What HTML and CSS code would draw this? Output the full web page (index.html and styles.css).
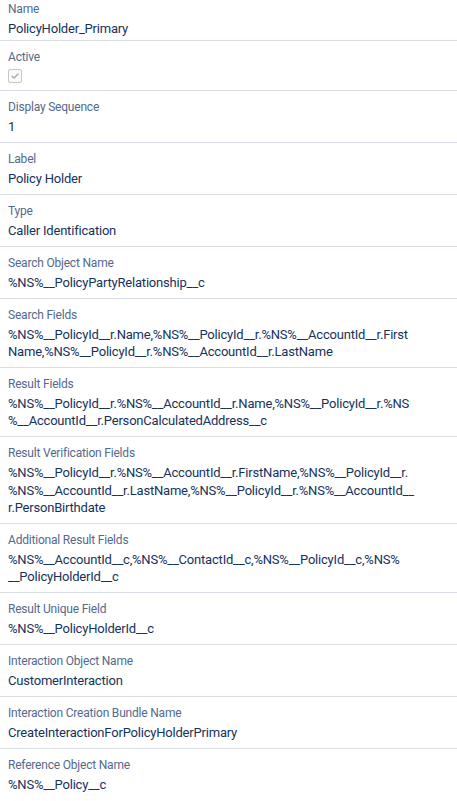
FILE: index.html
```html
<!DOCTYPE html>
<html lang="en">
<head>
<meta charset="utf-8">
<title>Record Detail</title>
<link rel="stylesheet" href="styles.css">
</head>
<body>
<div class="record">
  <div class="field first">
    <div class="label">Name</div>
    <div class="value">PolicyHolder_Primary</div>
  </div>
  <div class="field">
    <div class="label">Active</div>
    <div class="value">
      <span class="checkbox">
        <svg viewBox="0 0 14 14" width="14" height="14" aria-hidden="true">
          <path d="M3.6 7.2 L5.9 9.4 L10.5 4.6" fill="none" stroke="#a8a8a8" stroke-width="1.6" stroke-linecap="round" stroke-linejoin="round"/>
        </svg>
      </span>
    </div>
  </div>
  <div class="field">
    <div class="label">Display Sequence</div>
    <div class="value">1</div>
  </div>
  <div class="field">
    <div class="label">Label</div>
    <div class="value">Policy Holder</div>
  </div>
  <div class="field">
    <div class="label">Type</div>
    <div class="value">Caller Identification</div>
  </div>
  <div class="field">
    <div class="label">Search Object Name</div>
    <div class="value">%NS%__PolicyPartyRelationship__c</div>
  </div>
  <div class="field">
    <div class="label">Search Fields</div>
    <div class="value">%NS%__PolicyId__r.Name,%NS%__PolicyId__r.%NS%__AccountId__r.First<br>Name,%NS%__PolicyId__r.%NS%__AccountId__r.LastName</div>
  </div>
  <div class="field">
    <div class="label">Result Fields</div>
    <div class="value">%NS%__PolicyId__r.%NS%__AccountId__r.Name,%NS%__PolicyId__r.%NS<br>%__AccountId__r.PersonCalculatedAddress__c</div>
  </div>
  <div class="field">
    <div class="label">Result Verification Fields</div>
    <div class="value">%NS%__PolicyId__r.%NS%__AccountId__r.FirstName,%NS%__PolicyId__r.<br>%NS%__AccountId__r.LastName,%NS%__PolicyId__r.%NS%__AccountId__<br>r.PersonBirthdate</div>
  </div>
  <div class="field">
    <div class="label">Additional Result Fields</div>
    <div class="value">%NS%__AccountId__c,%NS%__ContactId__c,%NS%__PolicyId__c,%NS%<br>__PolicyHolderId__c</div>
  </div>
  <div class="field">
    <div class="label">Result Unique Field</div>
    <div class="value">%NS%__PolicyHolderId__c</div>
  </div>
  <div class="field">
    <div class="label">Interaction Object Name</div>
    <div class="value">CustomerInteraction</div>
  </div>
  <div class="field">
    <div class="label">Interaction Creation Bundle Name</div>
    <div class="value">CreateInteractionForPolicyHolderPrimary</div>
  </div>
  <div class="field last">
    <div class="label">Reference Object Name</div>
    <div class="value">%NS%__Policy__c</div>
  </div>
</div>
</body>
</html>
```
FILE: styles.css
```css
html, body {
  margin: 0;
  padding: 0;
  background: #ffffff;
}

body {
  font-family: Roboto, "Open Sans", "Liberation Sans", sans-serif;
}

.record {
  display: flex;
  flex-direction: column;
}

.field {
  padding: 7px 8px 6.75px 8px;
  border-bottom: 1px solid #d8dde6;
}

.field.first {
  padding-top: 0;
  padding-bottom: 2.75px;
}

.field.last {
  border-bottom: none;
}

.label {
  font-size: 12px;
  line-height: 18px;
  color: #54698d;
  letter-spacing: -0.2px;
  margin-bottom: 2px;
}

.value {
  font-size: 13px;
  line-height: 17.25px;
  color: #16325c;
  letter-spacing: -0.2px;
  word-break: break-all;
  overflow-wrap: anywhere;
}

.checkbox {
  display: block;
  width: 14px;
  height: 14px;
  margin-top: 3px;
  box-sizing: border-box;
  border: 1px solid #c9c7c5;
  border-radius: 2px;
  background: #fafaf9;
}

.checkbox svg {
  display: block;
  width: 12px;
  height: 12px;
}
```
